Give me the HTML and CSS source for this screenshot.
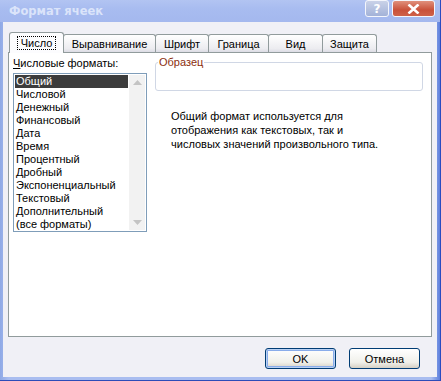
FILE: index.html
```html
<!DOCTYPE html>
<html lang="ru">

<head>
    <meta charset="UTF-8">
    <title>Формат ячеек</title>
    <link rel="stylesheet" href="styles.css">
</head>

<body>

    <div class="window">
        <div class="titlebar">
            <span class="title">Формат ячеек</span>
            <div class="caption-buttons">
                <div class="cap-btn help">?</div>
                <div class="cap-btn close">
                    <svg width="13" height="10" viewBox="0 0 13 10">
                        <path d="M1.5 0.5 L11.5 9.5 M11.5 0.5 L1.5 9.5" stroke="#fff" stroke-width="2.6" />
                    </svg>
                </div>
            </div>
        </div>

        <div class="client">
            <div class="tabs">
                <div class="tab active"><span class="focus">Число</span></div>
                <div class="tab">Выравнивание</div>
                <div class="tab">Шрифт</div>
                <div class="tab">Граница</div>
                <div class="tab">Вид</div>
                <div class="tab">Защита</div>
            </div>

            <div class="panel">
                <div class="formats">
                    <div class="label"><u>Ч</u>исловые форматы:</div>
                    <div class="listbox">
                        <ul class="items">
                            <li class="selected">Общий</li>
                            <li>Числовой</li>
                            <li>Денежный</li>
                            <li>Финансовый</li>
                            <li>Дата</li>
                            <li>Время</li>
                            <li>Процентный</li>
                            <li>Дробный</li>
                            <li>Экспоненциальный</li>
                            <li>Текстовый</li>
                            <li>Дополнительный</li>
                            <li>(все форматы)</li>
                        </ul>
                        <div class="scrollbar">
                            <svg width="9" height="5" viewBox="0 0 9 5"><path d="M0 5 L4.5 0 L9 5 Z" fill="#c4c4c4" /></svg>
                            <svg width="9" height="5" viewBox="0 0 9 5"><path d="M0 0 L4.5 5 L9 0 Z" fill="#c4c4c4" /></svg>
                        </div>
                    </div>
                </div>

                <div class="details">
                    <fieldset class="sample">
                        <legend>Образец</legend>
                    </fieldset>
                    <p class="description">
                        Общий формат используется для<br>
                        отображения как текстовых, так и<br>
                        числовых значений произвольного типа.
                    </p>
                </div>
            </div>

            <div class="buttons">
                <button class="default">OK</button>
                <button>Отмена</button>
            </div>
        </div>
    </div>

</body>

</html>
```

FILE: styles.css
```css
body {
    margin: 0;
    font-family: "Liberation Sans", Arial, sans-serif;
    font-size: 11px;
    color: #000;
    background-color: #fff;
}

.window {
    width: 441px;
    height: 381px;
    box-sizing: border-box;
    display: flex;
    flex-direction: column;
    background: linear-gradient(to right, #8fa9e6, #a9bdf0 2%, #a9bdf0 98%, #5d7fdc);
    border-right: 1px solid #2a4bc0;
    border-bottom: 1px solid #2d4cb8;
    overflow: hidden;
}

.titlebar {
    height: 22px;
    flex-shrink: 0;
    display: flex;
    align-items: flex-start;
    justify-content: space-between;
    padding: 0 5px 0 9px;
    background: linear-gradient(to bottom, #b2c4f2 0%, #a8bcf0 40%, #a4b8ee 100%);
}

.title {
    font-family: "DejaVu Sans", sans-serif;
    font-weight: bold;
    font-size: 11.5px;
    color: #dbe4fa;
    padding-top: 4px;
}

.caption-buttons {
    display: flex;
    gap: 3px;
    padding-top: 0;
}

.cap-btn {
    height: 17px;
    box-sizing: border-box;
    border-radius: 3px;
    border: 1px solid #f4f6fc;
    display: flex;
    align-items: center;
    justify-content: center;
}

.help {
    width: 24px;
    background: linear-gradient(to bottom, #c9d2e8, #a3b2d8);
    color: #fff;
    font-family: "DejaVu Sans", sans-serif;
    font-weight: bold;
    font-size: 12px;
}

.close {
    width: 43px;
    background: linear-gradient(to bottom, #e0907c, #c9513a 60%, #cf6249);
}

.client {
    flex: 1;
    margin: 0 3px 3px 3px;
    background-color: #f0f0f6;
    display: flex;
    flex-direction: column;
    padding: 10px 5px 0 5px;
}

.tabs {
    display: flex;
    align-items: flex-end;
    height: 20px;
    padding-left: 1px;
    position: relative;
    z-index: 1;
}

.tab {
    height: 18px;
    box-sizing: border-box;
    border: 1px solid #919b9c;
    border-bottom: none;
    border-radius: 3px 3px 0 0;
    background: linear-gradient(to bottom, #ffffff, #ececf0 80%, #dcdce4);
    padding: 3px 6px 0 6px;
    text-align: center;
    margin-right: -1px;
}

.tab:nth-child(2) { width: 93px; }
.tab:nth-child(3) { width: 54px; }
.tab:nth-child(4) { width: 61px; }
.tab:nth-child(5) { width: 55px; }
.tab:nth-child(6) { width: 55px; }

.tab.active {
    width: 55px;
    height: 21px;
    background: #fcfcfe;
    padding-top: 4px;
    margin-bottom: -1px;
    z-index: 2;
}

.focus {
    outline: 1px dotted #000;
    padding: 0 3px;
}

.panel {
    height: 285px;
    box-sizing: border-box;
    background-color: #fff;
    border: 1px solid #919b9c;
    display: flex;
    padding: 4px 8px 0 4px;
    gap: 8px;
}

.formats {
    display: flex;
    flex-direction: column;
    width: 134px;
}

.label {
    height: 16px;
}

.listbox {
    height: 159px;
    box-sizing: border-box;
    border: 1px solid #7f9db9;
    display: flex;
    padding: 1px;
}

.items {
    list-style: none;
    margin: 0;
    padding: 0;
    flex: 1;
}

.items li {
    height: 13px;
    line-height: 13px;
    padding-left: 1px;
}

.items li.selected {
    background-color: #3c3c3c;
    color: #fff;
    margin-right: 1px;
}

.scrollbar {
    width: 16px;
    background-color: #f2f2f2;
    display: flex;
    flex-direction: column;
    justify-content: space-between;
    align-items: center;
    padding: 5px 0;
}

.details {
    flex: 1;
    display: flex;
    flex-direction: column;
}

.sample {
    margin: 0;
    padding: 0;
    height: 35px;
    box-sizing: border-box;
    border: 1px solid #d0d7e5;
    border-radius: 3px;
    margin-top: -1px;
}

.sample legend {
    color: #8b2e0e;
    padding: 0 1px;
    margin-left: 2px;
}

.description {
    margin: 18px 0 0 16px;
    font-size: 11px;
    line-height: 14px;
}

.buttons {
    display: flex;
    justify-content: flex-end;
    gap: 13px;
    padding: 11px 12px 0 0;
}

button {
    font-family: "Liberation Sans", Arial, sans-serif;
    font-size: 11px;
    width: 71px;
    height: 21px;
    border: 1px solid #003c74;
    border-radius: 3px;
    background: linear-gradient(to bottom, #ffffff, #f0f0ea 70%, #d6d0c5);
    color: #000;
    padding: 0;
}

button.default {
    box-shadow: inset 0 0 0 1px #b9d1f4, inset 0 0 0 2px #89acea;
}
```
